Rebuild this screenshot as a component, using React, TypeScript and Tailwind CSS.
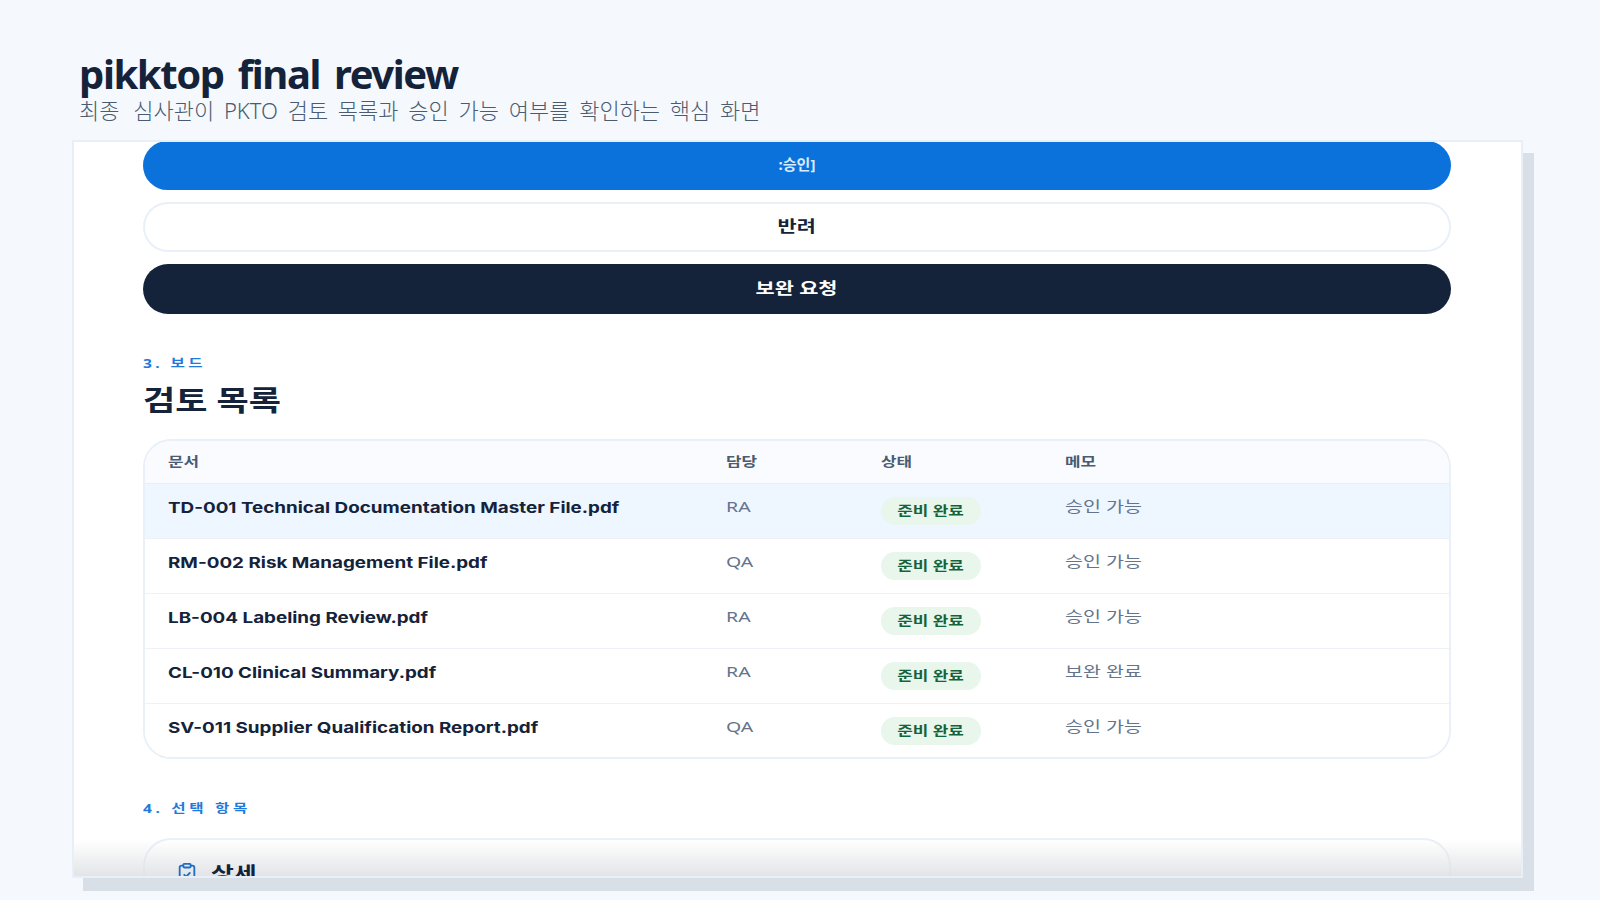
import { ClipboardCheck } from "lucide-react";

const rows = [
	{ name: "TD-001 Technical Documentation Master File.pdf", owner: "RA", memo: "승인 가능", active: true },
	{ name: "RM-002 Risk Management File.pdf", owner: "QA", memo: "승인 가능" },
	{ name: "LB-004 Labeling Review.pdf", owner: "RA", memo: "승인 가능" },
	{ name: "CL-010 Clinical Summary.pdf", owner: "RA", memo: "보완 완료" },
	{ name: "SV-011 Supplier Qualification Report.pdf", owner: "QA", memo: "승인 가능" },
];

const GRID = "grid grid-cols-[558px_155px_184px_1fr]";
// the reference's card text is drawn wider than the font's natural width
const WIDE = "inline-block origin-left scale-x-[1.3] whitespace-nowrap";
const WIDE_CENTER = "inline-block origin-center scale-x-[1.3] whitespace-nowrap";

export default function App() {
	return (
		<div className="h-[900px] w-[1600px] overflow-hidden bg-[#f5f8fc] font-['Noto_Sans','Noto_Sans_CJK_KR',sans-serif] text-[#14233a]">
			<div className="pl-[79px] pt-[49px]">
				<h1 className="h-[50px] text-[40px] font-bold leading-[50px] tracking-[-1.4px] [word-spacing:5px]">pikktop final review</h1>
				<p className="mt-[-1px] h-[42px] text-[22px] font-light leading-[24px] text-[#4a5c72] [word-spacing:4px]">
					<span className="mr-[4px]">최종</span> 심사관이 PKTO 검토 목록과 승인 가능 여부를 확인하는 핵심 화면
				</p>
			</div>
			<div className="ml-[72px] h-[738px] w-[1451px] shadow-[11px_13px_0_#d8dfe6]">
				<div className="relative h-full overflow-hidden border-2 border-[#e8eff8] bg-white pl-[69px] pr-[70px]">
					<button className="mt-[-1px] block h-[49px] w-full rounded-full bg-[#0b72dc] pb-[2px] text-[15px] font-bold text-[#dcebfb]">:승인]</button>
					<button className="mt-[12px] block h-[50px] w-full rounded-full border-2 border-[#e9f0f8] bg-white pb-[2px] text-[16px] font-bold text-[#14233a]">
						<span className={WIDE_CENTER}>반려</span>
					</button>
					<button className="mt-[12px] block h-[50px] w-full rounded-full bg-[#14233a] pb-[2px] text-[16px] font-bold text-white">
						<span className={WIDE_CENTER}>보완 요청</span>
					</button>

					<div className="mt-[41px] text-[12px] font-bold leading-[18px] tracking-[2.6px] text-[#1f7adb]">
						<span className={WIDE}>3. 보드</span>
					</div>
					<h2 className="mt-[7px] text-[28px] font-bold leading-[40px]">
						<span className="inline-block origin-left scale-x-[1.25] whitespace-nowrap">검토 목록</span>
					</h2>

					<div className="mt-[19px] overflow-hidden rounded-[28px] border-2 border-[#e9f0f8]">
						<div className={`${GRID} h-[43px] items-center border-b border-[#e8eff7] bg-[#f9fbff] pl-[23px] text-[13px] font-bold text-[#4a5c72]`}>
							<div><span className={WIDE}>문서</span></div>
							<div><span className={WIDE}>담당</span></div>
							<div><span className={WIDE}>상태</span></div>
							<div><span className={WIDE}>메모</span></div>
						</div>
						{rows.map((row) => (
							<div key={row.name} className={`${GRID} h-[55px] border-b border-[#eef2f7] pl-[23px] pt-[12px] last:h-[53px] last:border-b-0 ${row.active ? "bg-[#eef6ff]" : "bg-white"}`}>
								<div className="font-['Inter','Noto_Sans_CJK_KR',sans-serif] text-[15px] font-bold leading-[24px]">
									<span className="inline-block origin-left scale-x-[1.255] whitespace-nowrap">{row.name}</span>
								</div>
								<div className="mt-[-2px] text-[15px] leading-[24px] text-[#64748b]">
									<span className={WIDE}>{row.owner}</span>
								</div>
								<div>
									<span className="mt-[1px] inline-flex h-[28px] w-[100px] items-center justify-center rounded-full bg-[#e8f6ec] text-[13px] font-bold text-[#14633a]">
										<span className={WIDE_CENTER}>준비 완료</span>
									</span>
								</div>
								<div className="mt-[-2px] text-[15px] leading-[24px] text-[#64748b]">
									<span className={WIDE}>{row.memo}</span>
								</div>
							</div>
						))}
					</div>

					<div className="mt-[41px] text-[12px] font-bold leading-[18px] tracking-[2.8px] text-[#1f7adb]">
						<span className={WIDE}>4. 선택 항목</span>
					</div>
					<div className="mt-[20px] h-[120px] rounded-[28px] border-2 border-[#e9f0f8] px-[31px] pt-[19px]">
						<div className="relative z-10 flex items-center gap-[13px]">
							<ClipboardCheck className="h-[22px] w-[22px] text-[#1f6fc4]" />
							<span className="text-[18px] font-bold leading-[28px]">
								<span className="inline-block origin-left scale-x-[1.38] whitespace-nowrap">상세</span>
							</span>
						</div>
					</div>
					<div className="pointer-events-none absolute inset-x-0 bottom-0 h-[36px] bg-gradient-to-b from-white/0 to-[#dfe1e4]/90" />
				</div>
			</div>
		</div>
	);
}
